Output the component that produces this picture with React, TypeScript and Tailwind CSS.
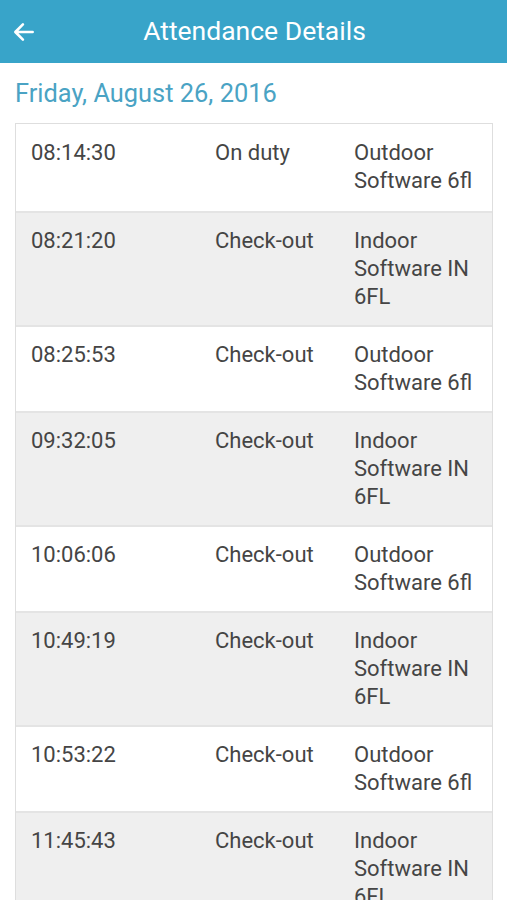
import React from "react";

const rows = [
  { time: "08:14:30", type: "On duty", place: "Outdoor Software 6fl" },
  { time: "08:21:20", type: "Check-out", place: "Indoor Software IN 6FL" },
  { time: "08:25:53", type: "Check-out", place: "Outdoor Software 6fl" },
  { time: "09:32:05", type: "Check-out", place: "Indoor Software IN 6FL" },
  { time: "10:06:06", type: "Check-out", place: "Outdoor Software 6fl" },
  { time: "10:49:19", type: "Check-out", place: "Indoor Software IN 6FL" },
  { time: "10:53:22", type: "Check-out", place: "Outdoor Software 6fl" },
  { time: "11:45:43", type: "Check-out", place: "Indoor Software IN 6FL" },
];

export default function App() {
  return (
    <div className="w-[507px] h-[900px] overflow-hidden bg-white font-['Roboto',sans-serif]">
      <div className="h-[63px] bg-[#38a4c9] flex items-center relative">
        <svg
          className="absolute left-[11px] top-[19px]"
          width="26"
          height="26"
          viewBox="0 0 24 24"
          fill="none"
          stroke="white"
          strokeWidth="2.4"
          strokeLinecap="round"
          strokeLinejoin="round"
        >
          <path d="M20 12H4.5M11 5l-7 7 7 7" />
        </svg>
        <h1 className="w-full text-center text-white text-[26.5px] leading-none pl-[2px]">
          Attendance Details
        </h1>
      </div>

      <div className="px-[15px] pt-[15px] pb-[15px] text-[25.4px] leading-[30px] text-[#4aa3c4]">
        Friday, August 26, 2016
      </div>

      <div className="ml-[15px] w-[478px] border border-[#dedede] text-[22px] leading-[28px] text-[#454545]">
        {rows.map((r, i) => (
          <div
            key={i}
            className={`flex ${i > 0 ? "py-[14px] border-t-2 border-[#e4e4e4]" : "pt-[15px] pb-[16px]"} ${
              i % 2 === 1 ? "bg-[#efefef]" : "bg-white"
            }`}
          >
            <div className="w-[199px] pl-[15px] shrink-0">{r.time}</div>
            <div className="w-[139px] shrink-0">{r.type}</div>
            <div className="w-[132px] shrink-0">{r.place}</div>
          </div>
        ))}
      </div>
    </div>
  );
}
